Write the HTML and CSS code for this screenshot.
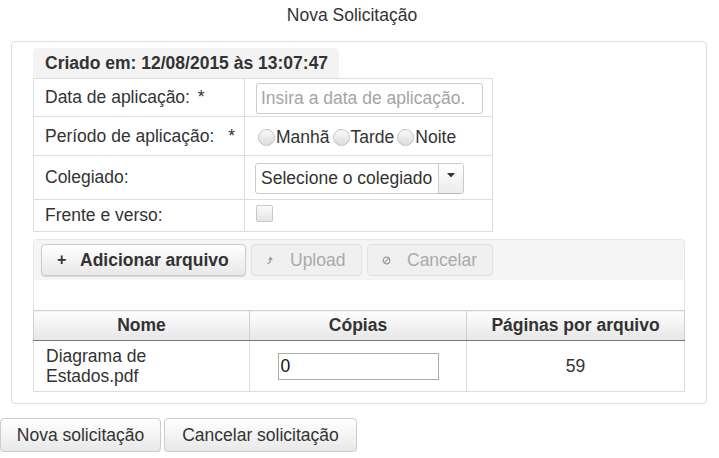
FILE: index.html
```html
<!DOCTYPE html>
<html lang="pt-BR">
<head>
<meta charset="utf-8">
<title>Nova Solicitação</title>
<link rel="stylesheet" href="styles.css">
</head>
<body>
<h1 class="title">Nova Solicitação</h1>
<div class="panel">
  <div class="form-block">
    <div class="created">Criado em: 12/08/2015 às 13:07:47</div>
    <table class="form-table">
      <tr class="r1">
        <td class="lbl">Data de aplicação: <span class="req">*</span></td>
        <td class="val"><input class="text-input" type="text" placeholder="Insira a data de aplicação."></td>
      </tr>
      <tr class="r2">
        <td class="lbl">Período de aplicação: <span class="req req2">*</span></td>
        <td class="val">
          <div class="radios">
            <span class="radio"></span><span class="rlabel">Manhã</span>
            <span class="radio"></span><span class="rlabel">Tarde</span>
            <span class="radio"></span><span class="rlabel">Noite</span>
          </div>
        </td>
      </tr>
      <tr class="r3">
        <td class="lbl">Colegiado:</td>
        <td class="val">
          <div class="select">
            <span class="select-text">Selecione o colegiado</span>
            <span class="select-caret"><svg width="8" height="5" viewBox="0 0 8 5"><path d="M0 0h8L4 4.5z" fill="#333"/></svg></span>
          </div>
        </td>
      </tr>
      <tr class="r4">
        <td class="lbl">Frente e verso:</td>
        <td class="val"><span class="checkbox"></span></td>
      </tr>
    </table>
  </div>

  <div class="upload">
    <div class="toolbar">
      <button class="btn btn-add"><span class="plus">+</span>Adicionar arquivo</button>
      <button class="btn btn-disabled btn-upload"><svg class="ico" width="8" height="9" viewBox="0 0 8 9"><path d="M1.5 7.5c2.5 0 3-1.5 3-4.5M2.8 3.8L4.5 1.5 6.2 3.8" fill="none" stroke="#999" stroke-width="1.3"/></svg>Upload</button>
      <button class="btn btn-disabled btn-cancel"><svg class="ico" width="9" height="9" viewBox="0 0 9 9"><circle cx="4.5" cy="4.5" r="3.3" fill="none" stroke="#999" stroke-width="1.2"/><path d="M2.3 6.7L6.7 2.3" stroke="#999" stroke-width="1.2"/></svg>Cancelar</button>
    </div>
    <div class="dropzone"></div>
    <table class="files">
      <thead>
        <tr><th class="c1">Nome</th><th class="c2">Cópias</th><th class="c3">Páginas por arquivo</th></tr>
      </thead>
      <tbody>
        <tr>
          <td class="name">Diagrama de Estados.pdf</td>
          <td class="center"><input class="copies" type="text" value="0"></td>
          <td class="center">59</td>
        </tr>
      </tbody>
    </table>
  </div>
</div>
<div class="actions">
  <button class="btn-big">Nova solicitação</button>
  <button class="btn-big">Cancelar solicitação</button>
</div>
</body>
</html>
```
FILE: styles.css
```css
* { box-sizing: border-box; }
body {
  margin: 0;
  font-family: "Liberation Sans", Arial, sans-serif;
  font-size: 17.5px;
  color: #333;
  background: #fff;
}
.title {
  margin: 0;
  padding: 5px 15px 0 0;
  height: 41px;
  font-size: 17.5px;
  font-weight: normal;
  line-height: 20px;
  text-align: center;
}
.panel {
  margin: 0 12px 0 11px;
  border: 1px solid #ddd;
  border-radius: 4px;
  padding: 6px 21px 14px 21px;
  height: 363px;
}
.form-block { width: 460px; }
.created {
  display: inline-block;
  width: 306px;
  height: 30px;
  padding: 4px 0 0 12px;
  background: #f3f3f3;
  border-radius: 4px 4px 0 0;
  font-weight: bold;
  line-height: 22px;
  white-space: nowrap;
}
.form-table {
  width: 460px;
  border-collapse: collapse;
}
.form-table td {
  border: 1px solid #ddd;
  padding: 0 0 0 11px;
  vertical-align: middle;
  white-space: nowrap;
}
.form-table td.lbl { width: 211px; }
.form-table td.val { padding-left: 11px; }
.r1 { height: 38px; }
.r2 { height: 39px; }
.r3 { height: 44px; }
.r4 { height: 32px; }
.req { margin-left: 3px; }
.req2 { margin-left: 9px; }
.text-input {
  display: block;
  width: 227px;
  height: 31px;
  border: 1px solid #ccc;
  border-radius: 3px;
  padding: 0 4px;
  font-family: inherit;
  font-size: 17.5px;
  color: #333;
  margin-top: 1px;
}
.text-input::placeholder { color: #a4a4a4; }
.radios {
  display: flex;
  align-items: center;
  margin-left: 2px;
  margin-top: 2px;
}
.radio {
  display: inline-block;
  width: 17px;
  height: 17px;
  border-radius: 50%;
  border: 1px solid #c4c4c4;
  background: linear-gradient(#fafafa, #dcdcdc);
  margin-right: 1px;
}
.rlabel { margin-right: 3px; }
.select {
  display: flex;
  width: 209px;
  height: 31px;
  border: 1px solid #ccc;
  border-radius: 3px;
  margin-top: 2px;
  margin-left: -1px;
}
.select-text {
  flex: 1;
  padding-left: 5px;
  line-height: 29px;
  white-space: nowrap;
}
.select-caret {
  width: 25px;
  border-left: 1px solid #ccc;
  border-radius: 0 3px 3px 0;
  background: linear-gradient(#fff, #ececec);
  display: flex;
  justify-content: center;
  padding-top: 9px;
  box-shadow: 0 1px 1px rgba(0,0,0,0.1);
}
.checkbox {
  display: block;
  width: 17px;
  height: 17px;
  border: 1px solid #c8c8c8;
  border-radius: 2px;
  background: linear-gradient(#fbfbfb, #e5e5e5);
  margin-top: -5px;
}
.upload {
  margin-top: 7px;
  width: 652px;
  border: 1px solid #e6e6e6;
  border-radius: 4px 4px 0 0;
}
.toolbar {
  background: #f5f5f5;
  display: flex;
  gap: 5px;
  padding: 4px 7px 3px 7px;
  height: 40px;
  border-radius: 4px 4px 0 0;
}
.btn {
  height: 32px;
  border: 1px solid #ccc;
  border-radius: 4px;
  font-family: inherit;
  font-size: 17.5px;
  display: flex;
  align-items: center;
  padding: 0;
  white-space: nowrap;
}
.btn-add {
  width: 205px;
  background: linear-gradient(#fff, #e8e8e8);
  font-weight: bold;
  color: #333;
  padding-left: 15px;
  box-shadow: 0 1px 1px rgba(0,0,0,0.12);
}
.plus {
  font-size: 16px;
  font-weight: bold;
  width: 23px;
  text-align: left;
}
.btn-disabled {
  background: #f0f0f0;
  border-color: #e2e2e2;
  color: #aaa;
}
.btn-upload { width: 111px; padding-left: 14px; }
.btn-cancel { width: 126px; padding-left: 14px; }
.ico { margin-right: 16px; }
.dropzone {
  height: 30px;
  background: #fff;
}
.files {
  margin: 0 -1px -1px -1px;
  width: calc(100% + 2px);
  border-collapse: collapse;
}
.files th {
  height: 30px;
  font-weight: bold;
  background: linear-gradient(#fefefe, #e6e6e6);
  border: 1px solid #d0d0d0;
  border-bottom: 1px solid #777;
  padding: 0;
  white-space: nowrap;
}
.files .c1 { width: 216px; }
.files .c2 { width: 217px; }
.files td {
  height: 51px;
  border: 1px solid #ddd;
  padding: 0;
}
.files td.name {
  padding-left: 12px;
  line-height: 20px;
  padding-right: 60px;
}
.files td.center { text-align: center; }
.copies {
  width: 161px;
  height: 27px;
  border: 1px solid #aaa;
  font-family: inherit;
  font-size: 17.5px;
  padding: 0 2px;
  color: #111;
}
.actions {
  display: flex;
  gap: 3px;
  margin-top: 14px;
}
.btn-big {
  height: 34px;
  border: 1px solid #ccc;
  border-radius: 4px;
  background: linear-gradient(#fff, #e8e8e8);
  font-family: inherit;
  font-size: 17.5px;
  color: #333;
  padding: 0;
  box-shadow: 0 1px 1px rgba(0,0,0,0.1);
  white-space: nowrap;
}
.btn-big:first-child { width: 161px; }
.btn-big:last-child { width: 193px; }
```
